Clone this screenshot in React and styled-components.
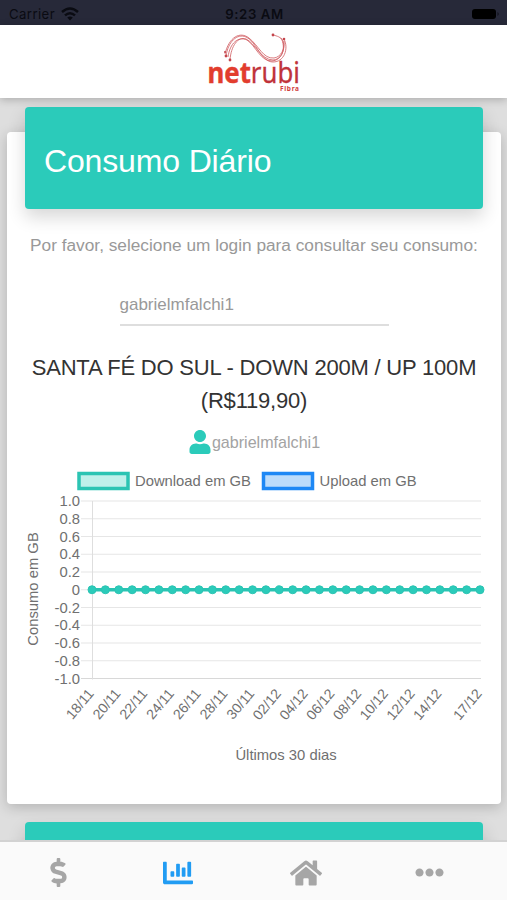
import React from "react";
import styled, { createGlobalStyle, ThemeProvider } from "styled-components";
import {
  FaDollarSign,
  FaChartBar,
  FaHome,
  FaEllipsisH,
  FaUser,
} from "react-icons/fa";

const theme = {
  colors: {
    primary: "#2bcbba",
    download: "#2bc4b3",
    upload: "#1e88f5",
    statusBar: "#272939",
    muted: "#999999",
    text: "#333333",
    active: "#219cf3",
    inactive: "#a6a6a6",
  },
  fonts: {
    main: '"Liberation Sans", Arial, sans-serif',
    status: 'Inter, "Liberation Sans", sans-serif',
  },
};

const GlobalStyle = createGlobalStyle`
  * {
    box-sizing: border-box;
  }

  body {
    margin: 0;
    background: #dedede;
    font-family: ${(props) => props.theme.fonts.main};
  }
`;

const Screen = styled.div`
  display: flex;
  flex-direction: column;
  height: 900px;
  overflow: hidden;
`;

const StatusBar = styled.div`
  display: grid;
  grid-template-columns: 1fr auto 1fr;
  align-items: center;
  flex: none;
  height: 25px;
  padding: 3px 7px 0 9px;
  background: ${(props) => props.theme.colors.statusBar};
  color: #0a0b12;
  font-family: ${(props) => props.theme.fonts.status};
  font-size: 13.2px;
`;

const Carrier = styled.div`
  display: flex;
  align-items: center;
  gap: 6px;
  letter-spacing: 0.4px;
`;

const Time = styled.div`
  font-weight: 600;
  letter-spacing: 0.6px;
`;

const Battery = styled.svg`
  justify-self: end;
`;

const Header = styled.header`
  display: flex;
  justify-content: center;
  flex: none;
  height: 73px;
  background: #ffffff;
  box-shadow: 0 2px 8px rgba(0, 0, 0, 0.22);
  z-index: 1;
`;

const Content = styled.main`
  flex: 1;
  min-height: 0;
  overflow: hidden;
  padding: 34px 6px 0 7px;
`;

const Card = styled.section`
  display: flow-root;
  height: 672px;
  margin-bottom: 43px;
  padding: 0 18px;
  background: #ffffff;
  border-radius: 4px;
  box-shadow: 0 3px 14px rgba(0, 0, 0, 0.2);
`;

const CardHeader = styled.div`
  display: flex;
  align-items: center;
  height: 102px;
  margin-top: -25px;
  padding: 6px 19px 0;
  border-radius: 4px;
  background: ${(props) => props.theme.colors.primary};
  box-shadow: 0 8px 18px rgba(0, 0, 0, 0.16);
`;

const CardBody = styled.div`
  display: flex;
  flex-direction: column;
  align-items: center;
  padding-top: 24px;
`;

const Title = styled.h1`
  margin: 0;
  color: #ffffff;
  font-size: 32px;
  font-weight: 400;
  letter-spacing: -0.15px;
`;

const Hint = styled.p`
  margin: 0;
  color: ${(props) => props.theme.colors.muted};
  font-size: 17.25px;
  line-height: 24px;
  white-space: nowrap;
`;

const LoginSelect = styled.div`
  width: 269px;
  height: 34px;
  margin-top: 35px;
  border-bottom: 2px solid #dedede;
  color: ${(props) => props.theme.colors.muted};
  font-size: 17px;
  line-height: 26px;
`;

const PlanName = styled.h2`
  margin: 25px -10px 0;
  color: ${(props) => props.theme.colors.text};
  font-size: 22px;
  font-weight: 400;
  line-height: 33px;
  letter-spacing: -0.2px;
  text-align: center;
`;

const Login = styled.div`
  display: flex;
  align-items: center;
  height: 26px;
  margin-top: 12px;
  color: #a3a3a3;
  font-size: 16.1px;

  svg {
    color: ${(props) => props.theme.colors.primary};
  }
`;

const Chart = styled.svg`
  display: block;
  margin-top: 11px;
  overflow: visible;
  font-family: ${(props) => props.theme.fonts.main};
  font-size: 14.8px;
`;

const ChartText = styled.text`
  fill: #707070;
`;

const DateLabel = styled(ChartText)`
  font-size: 14.1px;
`;

const TabBar = styled.nav`
  display: grid;
  grid-template-columns: 116px 123px 134px 112px;
  flex: none;
  height: 60px;
  border-top: 2px solid #d2d2d2;
  background: #fafafa;
  z-index: 1;
`;

const Tab = styled.a`
  display: flex;
  align-items: center;
  justify-content: center;
  padding-top: 3px;
  color: ${(props) =>
    props.$active ? props.theme.colors.active : props.theme.colors.inactive};
`;

const yTicks = ["1.0", "0.8", "0.6", "0.4", "0.2", "0", "-0.2", "-0.4", "-0.6", "-0.8", "-1.0"];

const xTicks = [
  [0, "18/11"],
  [2, "20/11"],
  [4, "22/11"],
  [6, "24/11"],
  [8, "26/11"],
  [10, "28/11"],
  [12, "30/11"],
  [14, "02/12"],
  [16, "04/12"],
  [18, "06/12"],
  [20, "08/12"],
  [22, "10/12"],
  [24, "12/12"],
  [26, "14/12"],
  [29, "17/12"],
];

const LEFT = 67;
const RIGHT = 455;
const TOP = 35;
const ROW = 17.75;
const STEP = (RIGHT - LEFT) / 29;

function Logo() {
  return (
    <svg width="100" height="73" viewBox="0 0 100 73">
      <g fill="none" stroke="#cf5a5f" strokeWidth="0.8">
        <path d="M22 31 C24 17 33 8 42 12 C53 17 57 37 69 37 C80 37 85 24 80 14" />
        <path d="M26 35 C27 21 34 11 42 14 C51 18 57 35 69 35 C76 35 82 26 79 16 C77 12 73 11 69 10" />
        <path d="M21 29 C25 12 36 6 45 13 C55 21 59 34 70 33 C77 32 81 24 80 16" />
        <path d="M24 32 C26 18 34 11 43 15 C52 21 56 36 68 36 C79 35 82 22 77 13" />
      </g>
      <g fill="#c4454c">
        <circle cx="22" cy="31" r="1.4" />
        <circle cx="26" cy="35" r="1.4" />
        <circle cx="21" cy="27" r="1" />
        <circle cx="69" cy="10" r="1.4" />
        <circle cx="80" cy="14" r="1.3" />
      </g>
      <text
        x="3.5"
        y="58"
        fontFamily='"Noto Sans", sans-serif'
        fontSize="29"
        textLength="92.5"
        lengthAdjust="spacingAndGlyphs"
      >
        <tspan fontWeight="700" fill="#e23d2e" stroke="#e23d2e" strokeWidth="0.4">net</tspan>
        <tspan fill="#c0333a" stroke="#c0333a" strokeWidth="0.3">rubi</tspan>
      </text>
      <text x="76" y="65.5" fontFamily='"Noto Sans", sans-serif' fontSize="6.5" fontWeight="700" fill="#d2403c" textLength="19">
        Fibra
      </text>
    </svg>
  );
}

function WifiIcon() {
  return (
    <svg width="18" height="14" viewBox="0 0 18 14">
      <g fill="none" stroke="currentColor" strokeWidth="2.5">
        <path d="M1 5 Q9 -2 17 5" />
        <path d="M4 8.4 Q9 4 14 8.4" />
      </g>
      <path d="M9 13.5 L6.2 10.6 Q9 8.3 11.8 10.6 Z" fill="currentColor" />
    </svg>
  );
}

function LegendItem({ x, color, fill, label }) {
  return (
    <g>
      <rect x={x} y="7.5" width="49" height="15" fill={fill} stroke={color} strokeWidth="3.5" />
      <ChartText x={x + 56} y="20">
        {label}
      </ChartText>
    </g>
  );
}

function ConsumptionChart() {
  const zero = TOP + ROW * 5;

  return (
    <Chart width="458" height="310">
      <LegendItem x={54} color={theme.colors.download} fill="#bff0ea" label="Download em GB" />
      <LegendItem x={238.5} color={theme.colors.upload} fill="#bcdcfb" label="Upload em GB" />

      {yTicks.map((tick, i) => (
        <g key={tick}>
          <line
            x1={LEFT - 11}
            x2={RIGHT + 1}
            y1={TOP + ROW * i}
            y2={TOP + ROW * i}
            stroke={i === 10 ? "#d8d8d8" : "#e6e6e6"}
            strokeWidth="1.2"
          />
          <ChartText x={LEFT - 12} y={TOP + ROW * i + 5} textAnchor="end">
            {tick}
          </ChartText>
        </g>
      ))}
      <line x1={LEFT + 0.5} x2={LEFT + 0.5} y1={TOP} y2={TOP + ROW * 10 + 1} stroke="#dedede" />

      <g fill={theme.colors.primary} stroke={theme.colors.download}>
        <line x1={LEFT} x2={RIGHT} y1={zero} y2={zero} strokeWidth="3.5" />
        {Array.from({ length: 30 }, (_, i) => (
          <circle key={i} cx={LEFT + STEP * i} cy={zero} r="4" />
        ))}
      </g>

      {xTicks.map(([index, label]) => (
        <DateLabel
          key={label}
          textAnchor="end"
          transform={`translate(${LEFT + STEP * index + 2.5}, 228) rotate(-50)`}
        >
          {label}
        </DateLabel>
      ))}

      <ChartText textAnchor="middle" transform="translate(13, 123) rotate(-90)">
        Consumo em GB
      </ChartText>
      <ChartText x="261" y="294" textAnchor="middle">
        Últimos 30 dias
      </ChartText>
    </Chart>
  );
}

function App() {
  return (
    <ThemeProvider theme={theme}>
      <GlobalStyle />
      <Screen>
        <StatusBar>
          <Carrier>
            Carrier
            <WifiIcon />
          </Carrier>
          <Time>9:23 AM</Time>
          <Battery width="30" height="12" viewBox="0 0 30 12">
            <rect x="2" y="1" width="24" height="10" rx="3" fill="#000000" />
            <path d="M27.5 4 Q30 6 27.5 8 Z" fill="#11121a" />
          </Battery>
        </StatusBar>

        <Header>
          <Logo />
        </Header>

        <Content>
          <Card>
            <CardHeader>
              <Title>Consumo Diário</Title>
            </CardHeader>
            <CardBody>
              <Hint>Por favor, selecione um login para consultar seu consumo:</Hint>
              <LoginSelect>gabrielmfalchi1</LoginSelect>
              <PlanName>SANTA FÉ DO SUL - DOWN 200M / UP 100M (R$119,90)</PlanName>
              <Login>
                <FaUser size={24} />
                gabrielmfalchi1
              </Login>
              <ConsumptionChart />
            </CardBody>
          </Card>

          <Card>
            <CardHeader />
          </Card>
        </Content>

        <TabBar>
          <Tab>
            <FaDollarSign size={29} />
          </Tab>
          <Tab $active>
            <FaChartBar size={30} />
          </Tab>
          <Tab>
            <FaHome size={32} />
          </Tab>
          <Tab>
            <FaEllipsisH size={29} />
          </Tab>
        </TabBar>
      </Screen>
    </ThemeProvider>
  );
}

export default App;
